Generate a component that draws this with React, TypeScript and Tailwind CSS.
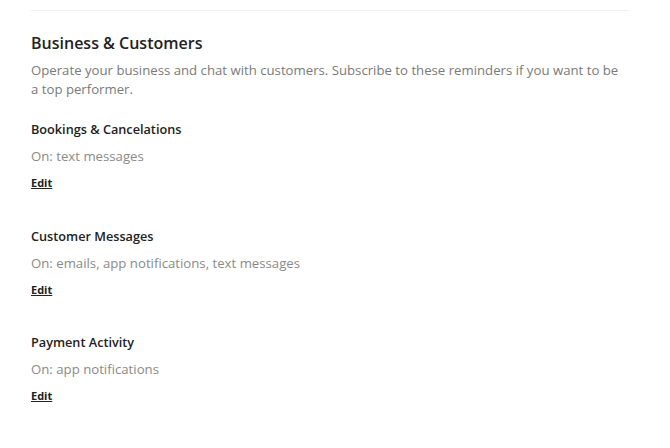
const sections = [
  { title: "Bookings & Cancelations", on: "text messages" },
  { title: "Customer Messages", on: "emails, app notifications, text messages" },
  { title: "Payment Activity", on: "app notifications" },
];

export default function App() {
  return (
    <div
      className="min-h-screen bg-white pl-[31px] pr-[41px] pt-[10px] text-[#222222]"
      style={{ fontFamily: '"Open Sans", "Liberation Sans", sans-serif' }}
    >
      <div className="border-t border-[#f0f0f0]" />

      <h2 className="mt-[20px] text-[16px] font-semibold leading-[24px]">
        Business &amp; Customers
      </h2>
      <p className="mt-[6px] max-w-[592px] text-[13.2px] leading-[19px] text-[#7a7a7a]">
        Operate your business and chat with customers. Subscribe to these reminders if you want to be
        a top performer.
      </p>

      <div className="mt-[20px] flex flex-col gap-[34.5px]">
        {sections.map((s) => (
          <div key={s.title} className="flex flex-col">
            <h3 className="text-[12.7px] font-semibold leading-[20px]">{s.title}</h3>
            <p className="mt-[7px] text-[13.2px] leading-[20px] text-[#8a8a8a]">On: {s.on}</p>
            <a href="#" className="mt-[9px] self-start text-[11px] font-bold leading-[16px] underline">
              Edit
            </a>
          </div>
        ))}
      </div>
    </div>
  );
}
